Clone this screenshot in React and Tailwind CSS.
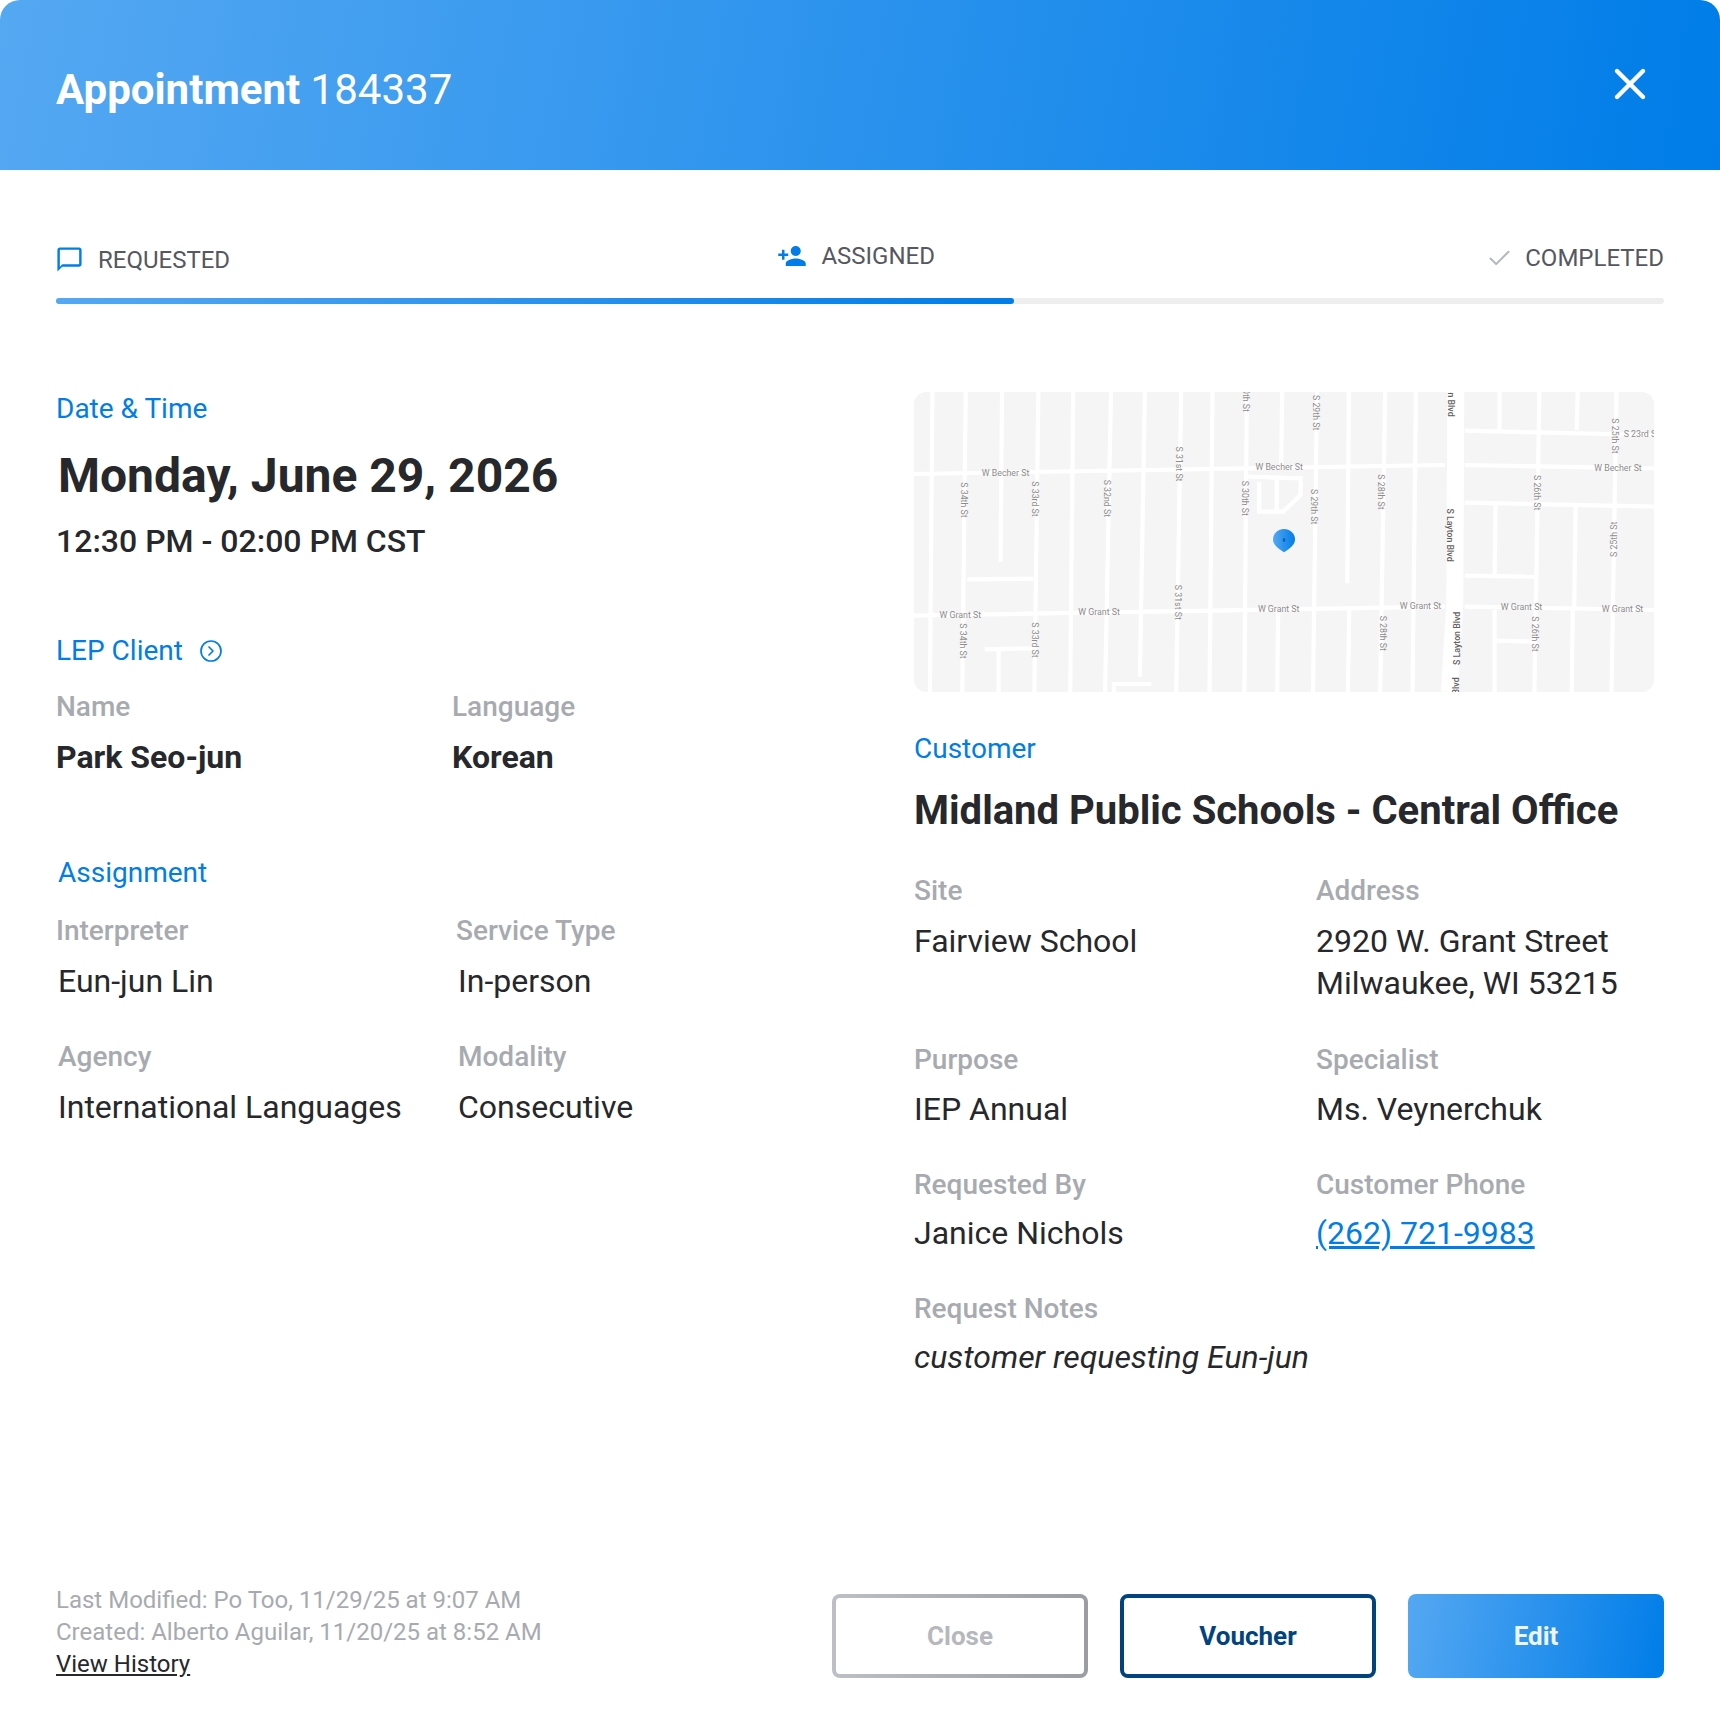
import { X, CircleChevronRight, Check } from "lucide-react";

// ── Map drawing ───────────────────────────────────────────────────────────
const mx = (x) => (x - 28) / 2.01;
const my = (y) => (y - 36) / 3;

const ROADS = [
  // east-west
  [[28, 282], [700, 265], [1095, 255]],
  [[1135, 255], [1515, 265]],
  [[28, 707], [1095, 680]],
  [[1135, 680], [1515, 690]],
  [[1135, 152], [1515, 165]],
  [[1135, 368], [1515, 380]],
  [[1135, 587], [1275, 590]],
  [[135, 598], [268, 596]],
  [[1195, 782], [1275, 785]],
  [[170, 808], [270, 805]],
  [[430, 936], [430, 912], [505, 912]],
  // north-south
  [[65, 36], [60, 936]],
  [[132, 36], [125, 936]],
  [[205, 36], [202, 545]],
  [[278, 36], [270, 936]],
  [[348, 36], [342, 936]],
  [[424, 36], [412, 936]],
  [[492, 36], [482, 890]],
  [[565, 36], [555, 936]],
  [[628, 36], [622, 936]],
  [[697, 36], [692, 936]],
  [[768, 36], [766, 265]],
  [[760, 690], [758, 936]],
  [[838, 36], [830, 936]],
  [[902, 36], [899, 610]],
  [[903, 690], [900, 936]],
  [[975, 36], [965, 936]],
  [[1037, 36], [1030, 936]],
  [[1205, 36], [1205, 150]],
  [[1197, 375], [1195, 585]],
  [[1195, 690], [1195, 936]],
  [[1285, 36], [1275, 936]],
  [[1362, 36], [1360, 150]],
  [[1358, 380], [1355, 680]],
  [[1352, 690], [1350, 936]],
  [[1440, 36], [1430, 936]],
  [[198, 808], [198, 936]],
  // parking lot
  [[700, 290], [805, 295], [805, 345], [770, 395], [722, 395], [722, 305]],
  [[757, 300], [757, 390]],
];

const LABELS = [
  ["W Becher St", 212, 278, 0],
  ["W Becher St", 762, 262, 0],
  ["W Becher St", 1443, 263, 0],
  ["W Grant St", 121, 704, 0],
  ["W Grant St", 400, 696, 0],
  ["W Grant St", 761, 686, 0],
  ["W Grant St", 1046, 679, 0],
  ["W Grant St", 1249, 681, 0],
  ["W Grant St", 1452, 686, 0],
  ["S 23rd St", 1490, 163, 0],
  ["S 34th St", 129, 360, 90],
  ["S 33rd St", 272, 357, 90],
  ["S 32nd St", 416, 355, 90],
  ["S 31st St", 560, 252, 90],
  ["S 30th St", 693, 355, 90],
  ["S 30th St", 695, 43, 90],
  ["S 29th St", 835, 98, 90],
  ["S 29th St", 832, 380, 90],
  ["S 28th St", 966, 336, 90],
  ["S 26th St", 1280, 338, 90],
  ["S 25th St", 1438, 168, 90],
  ["S 25th St", 1436, 478, -90],
  ["S 31st St", 558, 667, 90],
  ["S 34th St", 126, 783, 90],
  ["S 33rd St", 271, 780, 90],
  ["S 28th St", 970, 760, 90],
  ["S 26th St", 1276, 762, 90],
];

const DARK_LABELS = [
  ["S Layton Blvd", 1108, 30, 90],
  ["S Layton Blvd", 1106, 465, 90],
  ["S Layton Blvd", 1119, 775, -90],
  ["S Layton Blvd", 1117, 972, -90],
];

const MapLabel = ({ text, x, y, rot, dark }) => (
  <text
    x={mx(x)}
    y={my(y)}
    transform={`rotate(${rot} ${mx(x)} ${my(y)})`}
    textAnchor="middle"
    dominantBaseline="central"
    fontSize="8.8"
    fontWeight={dark ? 500 : 400}
    fill={dark ? "#5f5f5f" : "#8c8c8c"}
  >
    {text}
  </text>
);

const StreetMap = () => (
  <div className="h-[300px] w-[740px] overflow-hidden rounded-xl bg-[#f5f5f5]">
    <svg width="740" height="300" viewBox="0 0 740 300" fill="none">
      <defs>
        <linearGradient id="pin" x1="0" y1="0" x2="1" y2="0">
          <stop offset="0" stopColor="#55a8f2" />
          <stop offset="1" stopColor="#007de8" />
        </linearGradient>
      </defs>
      {ROADS.map((pts, i) => (
        <polyline
          key={i}
          points={pts.map(([x, y]) => `${mx(x)},${my(y)}`).join(" ")}
          stroke="#fff"
          strokeWidth="4.2"
        />
      ))}
      <polyline points={`${mx(1117)},0 ${mx(1115)},${my(670)} ${mx(1104)},300`} stroke="#fff" strokeWidth="17" />
      {LABELS.map(([t, x, y, r], i) => (
        <MapLabel key={i} text={t} x={x} y={y} rot={r} />
      ))}
      {DARK_LABELS.map(([t, x, y, r], i) => (
        <MapLabel key={i} text={t} x={x} y={y} rot={r} dark />
      ))}
      <path
        d="M370 137c-6 0-11 4.500-11 10.500 0 5 4.500 8.500 11 12.800 6.500-4.300 11-7.800 11-12.800 0-6-5-10.500-11-10.500z"
        fill="url(#pin)"
      />
      <ellipse cx="370" cy="148" rx="1.300" ry="2" fill="#0b5fb0" />
    </svg>
  </div>
);

// ── Icons ─────────────────────────────────────────────────────────────────
const ChatIcon = () => (
  <svg className="-ml-px" width="29" height="29" viewBox="0 0 24 24" fill="#007de8">
    <path d="M20 2H4c-1.100 0-2 .9-2 2v18l4-4h14c1.100 0 2-.9 2-2V4c0-1.100-.9-2-2-2zm0 14H6l-2 2V4h16v12z" />
  </svg>
);
const PersonAddIcon = () => (
  <svg width="30" height="30" viewBox="0 0 24 24" fill="#007de8">
    <path d="M15 12c2.210 0 4-1.790 4-4s-1.790-4-4-4-4 1.790-4 4 1.790 4 4 4zm-9-2V7H4v3H1v2h3v3h2v-3h3v-2H6zm9 4c-2.670 0-8 1.340-8 4v2h16v-2c0-2.660-5.330-4-8-4z" />
  </svg>
);

// ── Bits ──────────────────────────────────────────────────────────────────
const Heading = ({ children, className = "" }) => (
  <div className={`text-[28px] leading-8 text-[#007de8] ${className}`}>{children}</div>
);
const Label = ({ children, className = "" }) => (
  <div className={`text-[28px] leading-8 font-medium text-[#a7abb0] ${className}`}>{children}</div>
);
const Value = ({ children, className = "" }) => (
  <div className={`text-[32px] leading-10 text-[#26282b] ${className}`}>{children}</div>
);

export default function App() {
  return (
    <div className="flex h-[1726px] w-[1720px] flex-col bg-white font-[family-name:Roboto,sans-serif]">
      {/* Header */}
      <header className="flex h-[170px] shrink-0 items-center justify-between rounded-t-[20px] bg-[linear-gradient(100deg,#55a8f2,#007de8)] pr-[64px] pl-14 text-white">
        <h1 className="pt-[9px] text-[42px] leading-[50px]">
          <span className="font-bold">Appointment</span> 184337
        </h1>
        <X size={52} strokeWidth={2} className="mb-0.5" />
      </header>

      {/* Status steps */}
      <div className="mx-14 mt-[70px] flex h-[58px] shrink-0 justify-between text-[24px] leading-7 text-[#555860]">
        <div className="flex items-center gap-[14px] self-start pt-[5px]">
          <ChatIcon />
          <span>REQUESTED</span>
        </div>
        <div className="mr-[4px] flex items-center gap-[14px] self-start pt-px">
          <PersonAddIcon />
          <span>ASSIGNED</span>
        </div>
        <div className="flex items-center gap-[12px] self-start pt-[4px]">
          <Check size={27} strokeWidth={1.8} className="text-[#b4b7bb]" />
          <span>COMPLETED</span>
        </div>
      </div>
      <div className="mx-14 h-1.5 shrink-0 rounded-full bg-[#eeeeee]">
        <div className="h-full w-[958px] rounded-full bg-[linear-gradient(90deg,#55a8f2,#007de8)]" />
      </div>

      {/* Body */}
      <main className="flex flex-1 pt-[88px]">
        <section className="mt-px ml-14 w-[858px] shrink-0">
          <Heading>Date &amp; Time</Heading>
          <div className="mt-[23px] ml-0.5 text-[48px] leading-14 font-bold text-[#26282b]">Monday, June 29, 2026</div>
          <div className="mt-[17px] text-[32px] leading-10 font-medium text-[#26282b]">12:30 PM - 02:00 PM CST</div>

          <Heading className="mt-[74px] flex items-center gap-4">
            LEP Client
            <CircleChevronRight size={24} strokeWidth={1.7} />
          </Heading>
          <div className="mt-6 flex">
            <div className="w-[396px]">
              <Label>Name</Label>
              <Value className="mt-[14px] font-bold">Park Seo-jun</Value>
            </div>
            <div>
              <Label>Language</Label>
              <Value className="mt-[14px] font-bold">Korean</Value>
            </div>
          </div>

          <Heading className="mt-20 ml-0.5">Assignment</Heading>
          <div className="mt-[26px] flex">
            <div className="w-[400px]">
              <Label>Interpreter</Label>
              <Value className="mt-[14px] ml-0.5">Eun-jun Lin</Value>
              <Label className="mt-10 ml-0.5">Agency</Label>
              <Value className="mt-[14px] ml-0.5">International Languages</Value>
            </div>
            <div>
              <Label>Service Type</Label>
              <Value className="mt-[14px] ml-0.5">In-person</Value>
              <Label className="mt-10 ml-0.5">Modality</Label>
              <Value className="mt-[14px] ml-0.5">Consecutive</Value>
            </div>
          </div>
        </section>

        <section className="w-[750px] shrink-0">
          <StreetMap />
          <Heading className="mt-[41px]">Customer</Heading>
          <div className="mt-[22px] text-[40px] leading-12 font-bold text-[#26282b]">Midland Public Schools - Central Office</div>
          <div className="mt-10 grid grid-cols-[402px_1fr]">
            <div>
              <Label>Site</Label>
              <div className="mt-[13px] text-[32px] leading-[42px] text-[#26282b]">Fairview School</div>
            </div>
            <div>
              <Label>Address</Label>
              <div className="mt-[13px] text-[32px] leading-[42px] text-[#26282b]">
                2920 W. Grant Street
                <br />
                Milwaukee, WI 53215
              </div>
            </div>
            <div className="mt-10">
              <Label>Purpose</Label>
              <Value className="mt-[13px]">IEP Annual</Value>
            </div>
            <div className="mt-10">
              <Label>Specialist</Label>
              <Value className="mt-[13px]">Ms. Veynerchuk</Value>
            </div>
            <div className="mt-10">
              <Label>Requested By</Label>
              <Value className="mt-3">Janice Nichols</Value>
            </div>
            <div className="mt-10">
              <Label>Customer Phone</Label>
              <div className="mt-3 text-[32px] leading-10 text-[#007de8] underline">(262) 721-9983</div>
            </div>
          </div>
          <Label className="mt-10">Request Notes</Label>
          <Value className="mt-3 italic">customer requesting Eun-jun</Value>
        </section>
      </main>

      {/* Footer */}
      <footer className="mx-14 mb-[46px] flex shrink-0 items-end justify-between">
        <div className="text-[24px] leading-8 text-[#a7abb0]">
          <div>Last Modified: Po Too, 11/29/25 at 9:07 AM</div>
          <div>Created: Alberto Aguilar, 11/20/25 at 8:52 AM</div>
          <div className="text-[#26282b] underline">View History</div>
        </div>
        <div className="mb-0.5 flex gap-8 text-[26px] font-bold">
          <div className="h-[84px] w-[256px] rounded-lg bg-[linear-gradient(90deg,#bcbfc3,#9a9da2)] p-1">
            <button className="h-full w-full rounded bg-white text-[#b5b8bd]">Close</button>
          </div>
          <button className="h-[84px] w-[256px] rounded-lg border-4 border-[#00437f] bg-white text-[#00437f]">Voucher</button>
          <button className="h-[84px] w-[256px] rounded-lg bg-[linear-gradient(100deg,#55a8f2,#007de8)] text-[#eef4fb]">Edit</button>
        </div>
      </footer>
    </div>
  );
}
